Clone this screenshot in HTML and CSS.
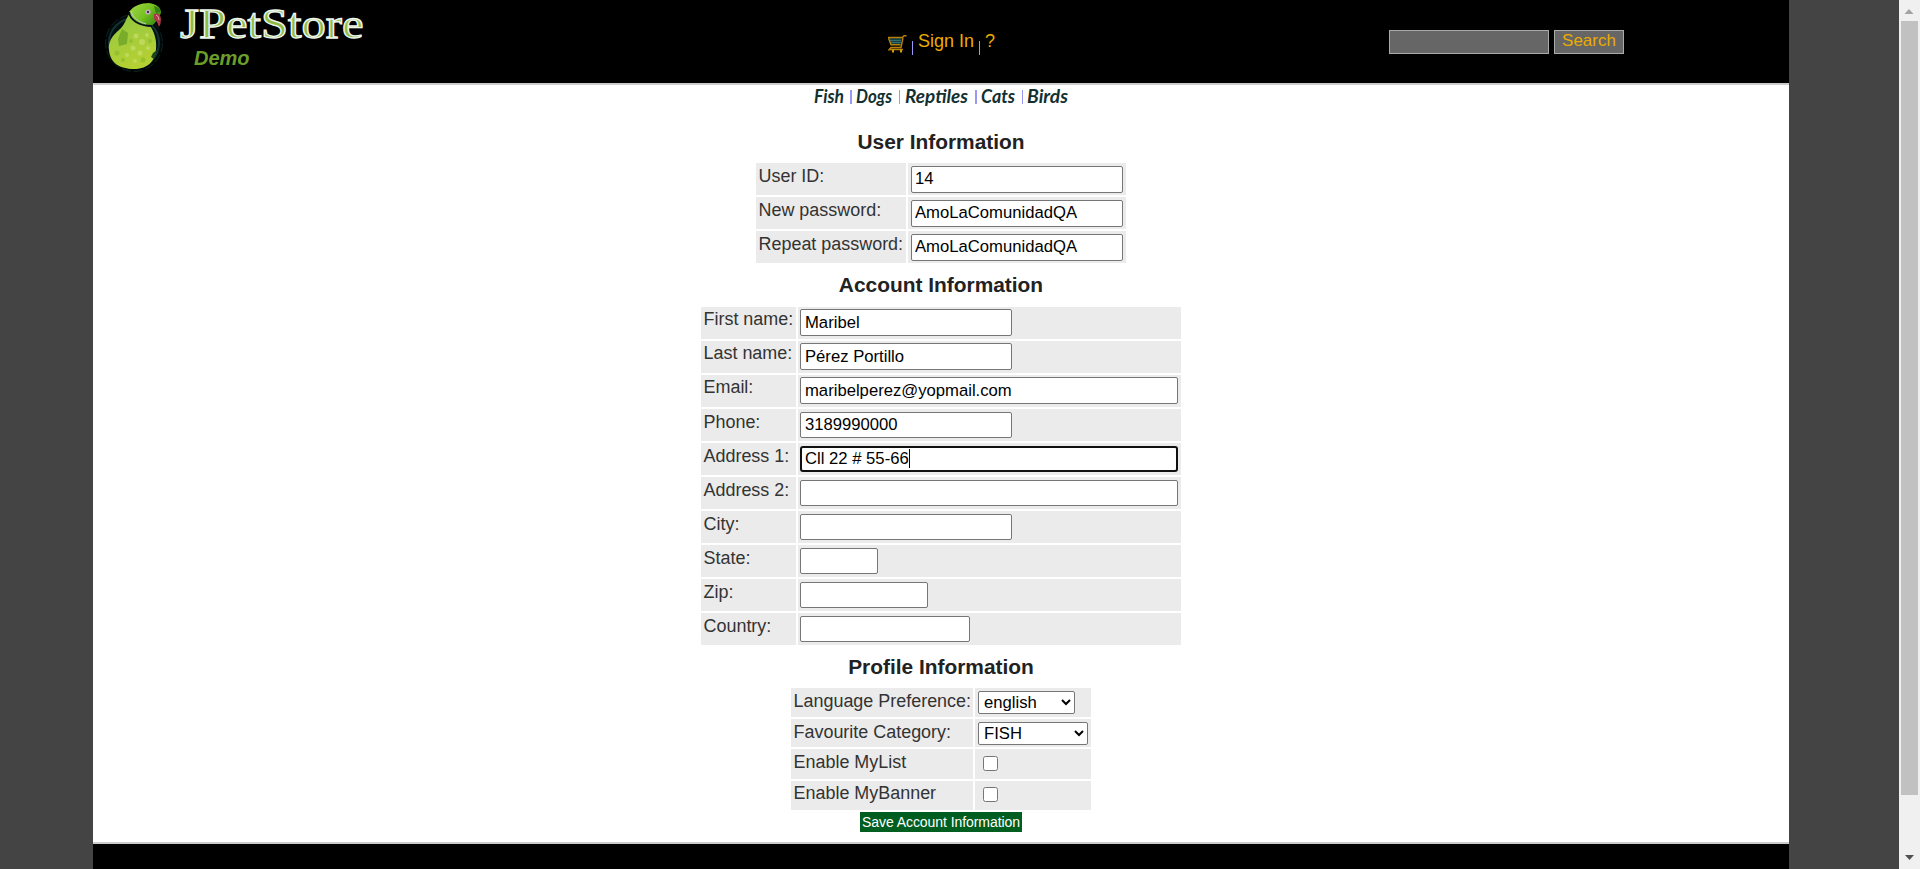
FILE: index.html
```html
<!DOCTYPE html>
<html lang="en">
<head>
<meta charset="utf-8">
<title>JPetStore Demo</title>
<link rel="stylesheet" href="styles.css">
</head>
<body>
<div class="page">
<header class="header">
  <a class="logo">
    <svg class="parrot" width="62" height="76" viewBox="0 0 62 76">
      <defs>
        <linearGradient id="body" x1="0" y1="0" x2=".3" y2="1"><stop offset="0" stop-color="#8cc63a"/><stop offset=".5" stop-color="#a3cc3c"/><stop offset="1" stop-color="#b4d032"/></linearGradient>
        <linearGradient id="head" x1="0" y1="0" x2="1" y2=".6"><stop offset="0" stop-color="#a5da4c"/><stop offset=".6" stop-color="#74c01e"/><stop offset="1" stop-color="#3d8f14"/></linearGradient>
      </defs>
      <circle cx="30" cy="43" r="28.5" fill="#010808" stroke="#0b2222" stroke-dasharray="9 3"/>
      <circle cx="30" cy="43" r="25" fill="#031011" stroke="#123233" stroke-width="2"/>
      <path d="M26 13C22 18 21 25 15 30C8 36 4 42 5 50C6 63 16 69 30 69C45 69 51 60 52 49C53 40 50 31 46 26Z" fill="url(#body)"/>
      <path d="M18 29L24 33L23 44L15 46L14 39Z" fill="#79ac28"/>
      <path d="M49 53L53 50L50 59L47 57Z" fill="#1d4a17"/>
      <g fill="#c8df6c" opacity=".7"><circle cx="32" cy="36" r="2.5"/><circle cx="38" cy="42" r="3"/><circle cx="29" cy="48" r="2.5"/><circle cx="36" cy="53" r="2.5"/><circle cx="23" cy="55" r="2"/><circle cx="43" cy="35" r="2"/><circle cx="31" cy="61" r="2"/><circle cx="44" cy="48" r="2"/></g>
      <g fill="#86b92b" opacity=".6"><circle cx="13" cy="53" r="2.5"/><circle cx="19" cy="60" r="2"/><circle cx="27" cy="41" r="2"/><circle cx="39" cy="60" r="2.5"/><circle cx="46" cy="41" r="2"/></g>
      <path d="M25 12C29 6 37 3 45 3C52 4 57 7 57 13C54 19 51 24 47 26C38 26 28 21 25 12Z" fill="url(#head)"/>
      <path d="M50 6Q55 7 57 12L52 13Z" fill="#347f18"/>
      <path d="M25 12C26 20 35 26 48 26" stroke="#080d1c" stroke-width="2" fill="none"/>
      <path d="M27 11C29 18 35 22 42 24" stroke="#b9cdc8" stroke-width="1" fill="none"/>
      <circle cx="44" cy="12" r="2.6" fill="#c5b2cc"/><circle cx="44" cy="12" r="1.2" fill="#453348"/>
      <path d="M50 14Q56 12 57 19Q57 24 55 27L53 22L50 19Z" fill="#aa3a46"/>
      <path d="M52 15Q55 16 55 20" stroke="#e3a3a6" fill="none"/>
    </svg>
    <span class="brand"><span class="brand-name">JPetStore</span><span class="brand-sub">Demo</span></span>
  </a>
  <nav class="menu">
    <svg class="cart" width="20" height="19" viewBox="0 0 20 19">
      <path d="M2 3H15L13.5 9.5H4Z" fill="#123f42"/>
      <path d="M3.5 5.5H14M4.500 7.500H13.500" stroke="#5d9a98" stroke-dasharray="1 1"/>
      <path d="M1 2.500H15.500L17 .8H19.500M1.500 3L4 9.800H13.500M16 3L14 12.500H4L1.500 15.500M3 14.500H16" fill="none" stroke="#b5800c" stroke-width="1.400"/>
      <path d="M5 14.500h2v3h-2zM13 14.500h2v3h-2z" fill="#d39a0c"/>
    </svg>
    <i class="bar bar-cart"></i><a class="sign">Sign In</a><i class="bar bar-sign"></i><a class="help">?</a>
  </nav>
  <form class="search"><input class="search-text" type="text"><button class="search-button" type="button">Search</button></form>
</header>
<main class="content">
  <nav class="categories">
    <svg width="256" height="20" viewBox="0 0 256 20">
      <g class="cat-text">
        <text x="1" y="15" textLength="30" lengthAdjust="spacingAndGlyphs">Fish</text>
        <text x="43" y="15" textLength="36" lengthAdjust="spacingAndGlyphs">Dogs</text>
        <text x="92" y="15" textLength="63" lengthAdjust="spacingAndGlyphs">Reptiles</text>
        <text x="168" y="15" textLength="34" lengthAdjust="spacingAndGlyphs">Cats</text>
        <text x="214" y="15" textLength="41" lengthAdjust="spacingAndGlyphs">Birds</text>
      </g>
      <path d="M37 2h2v14h-2zM86 2h1v14h-1zM162 2h2v14h-2zM209 2h1v14h-1z" fill="#9999f5"/>
    </svg>
  </nav>
  <h3 class="first-title">User Information</h3>
  <table class="user">
    <tr><td>User ID:</td><td><input class="medium" value="14"></td></tr>
    <tr><td>New password:</td><td><input class="medium" value="AmoLaComunidadQA"></td></tr>
    <tr><td>Repeat password:</td><td><input class="medium" value="AmoLaComunidadQA"></td></tr>
  </table>
  <h3 class="account-title">Account Information</h3>
  <table class="account">
    <tr><td>First name:</td><td><input class="medium" value="Maribel"></td></tr>
    <tr><td>Last name:</td><td><input class="medium" value="Pérez Portillo"></td></tr>
    <tr><td>Email:</td><td><input class="wide" value="maribelperez@yopmail.com"></td></tr>
    <tr class="low"><td>Phone:</td><td><input class="medium" value="3189990000"></td></tr>
    <tr class="low"><td>Address 1:</td><td><div class="focused wide">Cll 22 # 55-66<i class="caret"></i></div></td></tr>
    <tr class="low"><td>Address 2:</td><td><input class="wide"></td></tr>
    <tr class="low"><td>City:</td><td><input class="medium"></td></tr>
    <tr class="low"><td>State:</td><td><input class="state"></td></tr>
    <tr class="low"><td>Zip:</td><td><input class="zip"></td></tr>
    <tr class="low"><td>Country:</td><td><input class="country"></td></tr>
  </table>
  <h3 class="profile-title">Profile Information</h3>
  <table class="profile">
    <tr class="r1"><td>Language Preference:</td><td><select class="language"><option>english</option></select></td></tr>
    <tr class="r2"><td>Favourite Category:</td><td><select class="favourite"><option>FISH</option></select></td></tr>
    <tr class="r3"><td>Enable MyList</td><td><input class="check" type="checkbox"></td></tr>
    <tr class="r4"><td>Enable MyBanner</td><td><input class="check" type="checkbox"></td></tr>
  </table>
  <button class="save" type="button">Save Account Information</button>
</main>
<footer class="footer"></footer>
</div>
<aside class="scrollbar">
  <svg width="21" height="21" viewBox="0 0 21 21"><path d="M5.500 14L10 9L14.500 14Z" fill="#a3a3a3"/></svg>
  <div class="thumb"></div>
  <svg width="21" height="22" viewBox="0 0 21 22"><path d="M6 8L10.5 13L15 8Z" fill="#505050"/></svg>
</aside>
</body>
</html>
```
FILE: styles.css
```css
* { box-sizing: border-box; }
body { margin: 0; height: 869px; overflow: hidden; background: #444; display: flex; font-family: "Liberation Sans", Arial, sans-serif; font-size: 18px; color: #333; }
.page { width: 1696px; height: 869px; margin-left: 93px; display: flex; flex-direction: column; }
.header { height: 85px; background: #000; border-bottom: 2px solid #ccc; display: grid; grid-template-columns: 794px 502px 400px; flex: none; }
.logo { display: flex; }
.parrot { margin-left: 11px; }
.brand { display: flex; flex-direction: column; margin-left: 14px; }
.brand-name { font: 43px/46px "Liberation Serif", serif; color: #8fbb45; -webkit-text-stroke: 1.3px #edf5ee; margin-top: 1px; transform-origin: left; transform: scaleX(1.13); white-space: nowrap; }
.brand-sub { font: italic bold 20px/24px "Liberation Sans", sans-serif; color: #6b9e29; margin: -1px 0 0 14px; }
.menu { display: flex; align-items: flex-start; color: #eaac00; line-height: 20px; }
.cart { margin: 35px 0 0 0; }
.bar { width: 1px; height: 14px; background: #9999f5; margin-top: 41px; }
.bar-cart { margin-left: 5px; }
.sign { margin: 31px 0 0 5px; }
.bar-sign { margin-left: 5px; }
.help { margin: 31px 0 0 5px; }
.search { display: flex; gap: 5px; align-items: flex-start; padding-top: 30px; }
.search input, .search button { height: 24px; background: #666; border: 1px solid #aaa; border-radius: 0; font: 17px "Liberation Sans", sans-serif; color: #eaac00; padding: 0; margin: 0; }
.search .search-text { width: 160px; }
.search .search-button { width: 70px; line-height: 20px; padding-bottom: 2px; }
.content { height: 757px; background: #fff; display: flex; flex-direction: column; align-items: center; flex: none; }
.categories { height: 20px; margin: 3px 0 0 0; }
.categories svg { display: block; overflow: visible; }
.cat-text { font: italic bold 18px Lato, sans-serif; fill: #133031; }
h3 { margin: 0; font-size: 20.9px; line-height: 24px; color: #222; }
.first-title { margin: 22px 0 9px; }
.account-title { margin: 10px 0 10px; }
.profile-title { margin: 10px 0 9px; }
table { border-spacing: 2px; border-collapse: separate; margin: -2px 0; table-layout: fixed; }
td { background: #ebebeb; padding: 2px 3px; vertical-align: top; line-height: 21px; white-space: nowrap; }
td:first-child { padding-left: 2.5px; font-size: 17.95px; }
.user td:first-child, .low td:first-child, .r1 td:first-child, .r2 td:first-child, .r3 td:first-child { line-height: 23px; }
tr { height: 32px; }
.user { width: 374px; }
.user td:first-child { width: 150px; }
.account { width: 484px; }
.account td:first-child { width: 95px; }
.account td:last-child { padding-left: 2px; }
.profile { width: 304px; }
.profile td:first-child { width: 182px; }
td input, .focused { display: block; height: 27px; border: 1px solid #767676; border-radius: 2px; padding: 0 4px; margin: 0; font: 16.67px "Liberation Sans", Arial, sans-serif; color: #000; background: #fff; }
.user td input { margin-top: 1px; padding: 0 3px 1px; }
.low input, .focused { height: 26px; margin-top: 1px; }
.medium { width: 212px; }
.wide { width: 378px; }
.state { width: 78px; }
.zip { width: 128px; }
.country { width: 170px; }
.focused { border: 2px solid #101010; border-radius: 3px; padding: 0 3px 1px; line-height: 21px; display: flex; align-items: center; }
.caret { width: 1px; height: 19px; background: #000; }
.r1, .r4 { height: 29px; }
.r2 { height: 28px; }
.r3 { height: 30px; }
.profile td { padding-bottom: 0; }
select { display: block; height: 23px; margin: 1px 0 0; padding: 0 1px; border: 1px solid #767676; border-radius: 2px; background: #fff; color: #000; font: 16.67px "Liberation Sans", Arial, sans-serif; }
.language { width: 97px; }
.favourite { width: 110px; }
.profile .check { width: 15px; height: 15px; margin: 5px 0 0 5px; }
.r4 .check { margin-top: 4px; }
.save { width: 162px; height: 20px; margin-top: 2px; padding: 0; border: 0; background: #005e21; color: #fff; font: 14px "Liberation Sans", Arial, sans-serif; letter-spacing: -.06px; white-space: nowrap; }
.footer { height: 27px; background: #000; border-top: 2px solid #ccc; }
.scrollbar { width: 21px; height: 869px; margin-left: 110px; background: #f0f0f0; display: flex; flex-direction: column; align-items: center; }
.thumb { width: 17px; height: 774px; background: #c1c1c1; margin-bottom: 52px; }
```
